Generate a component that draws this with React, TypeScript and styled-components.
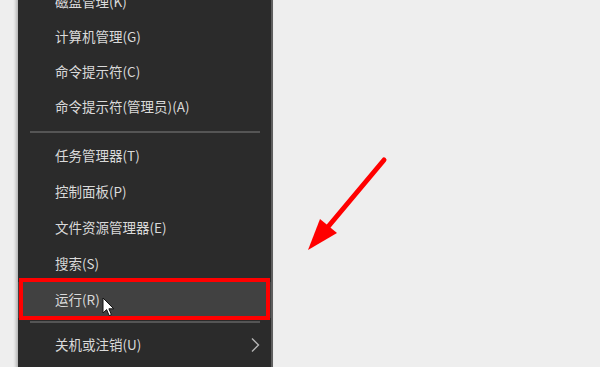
import React, { FC } from "react"
import styled, { createGlobalStyle } from "styled-components"

interface IItem {
  label: string
  active?: boolean
  submenu?: boolean
}

const groups: IItem[][] = [
  [{ label: "磁盘管理(K)" }, { label: "计算机管理(G)" }, { label: "命令提示符(C)" }, { label: "命令提示符(管理员)(A)" }],
  [
    { label: "任务管理器(T)" },
    { label: "控制面板(P)" },
    { label: "文件资源管理器(E)" },
    { label: "搜索(S)" },
    { label: "运行(R)", active: true },
  ],
  [{ label: "关机或注销(U)", submenu: true }],
]

const Cursor: FC = () => (
  <CursorIcon width="13" height="20" viewBox="0 0 13 20">
    <path d="M1 1 L1 16 L4.6 12.6 L7.2 18.6 L9.4 17.6 L6.9 11.8 L11.8 11.8 Z" fill="#fff" stroke="#111" strokeWidth="1" strokeLinejoin="round" />
  </CursorIcon>
)

const Chevron: FC = () => (
  <svg width="10" height="16" viewBox="0 0 10 16">
    <path d="M2 1.5 L8.5 8 L2 14.5" fill="none" stroke="#b4b4b4" strokeWidth="1.4" />
  </svg>
)

const RedArrow: FC = () => (
  <ArrowSvg width="90" height="102" viewBox="0 0 90 102">
    {/* shaft runs from the tail into the middle of the head */}
    <line x1="77" y1="10" x2="20" y2="78" stroke="#ff0000" strokeWidth="5" strokeLinecap="round" />
    <polygon points="1,100 13,69 30,83" fill="#ff0000" />
  </ArrowSvg>
)

const App: FC = () => (
  <>
    <GlobalStyle />
    <Page>
      <Menu>
        {groups.map((group, gi) => (
          <React.Fragment key={gi}>
            {gi > 0 && (
              <Separator first={gi === 1}>
                <Line />
              </Separator>
            )}
            <Group first={gi === 0} wide={gi > 0}>
              {group.map(item => (
                <Row key={item.label} active={item.active}>
                  <Label>{item.label}</Label>
                  {item.active && <Cursor />}
                  {item.submenu && <Chevron />}
                </Row>
              ))}
            </Group>
          </React.Fragment>
        ))}
      </Menu>
      <RedArrow />
    </Page>
  </>
)

export default App

//---------------------------STYLES-------------------------------------------//

const GlobalStyle = createGlobalStyle`
  html, body {
    margin: 0;
    padding: 0;
    height: 100%;
    overflow: hidden;
    background: #eeeeee;
  }
  #root {
    height: 100%;
  }
`

const Page = styled.div`
  position: relative;
  height: 367px;
  width: 600px;
  overflow: hidden;
  background: #eeeeee;
  font-family: "Noto Sans CJK SC", "Noto Sans", sans-serif;
`

const Menu = styled.div`
  margin-left: 18px;
  width: 253px;
  height: 420px;
  background: #2b2b2b;
  border-right: 2px solid #5e5e5e;
  box-shadow: -2px 0 3px rgba(0, 0, 0, 0.25);
`

interface IGroup {
  first?: boolean
  wide?: boolean
}

const Group = styled.div<IGroup>`
  display: flex;
  flex-direction: column;
  margin-top: ${p => (p.first ? "-16px" : "0")};
  & > div {
    height: ${p => (p.wide ? "36px" : "35px")};
  }
`

interface IRow {
  active?: boolean
}

const Row = styled.div<IRow>`
  position: relative;
  display: flex;
  align-items: center;
  padding: 0 11px 0 37px;
  background: ${p => (p.active ? "#414141" : "transparent")};
  &::after {
    content: "";
    display: ${p => (p.active ? "block" : "none")};
    position: absolute;
    left: 1px;
    right: 1px;
    top: -4px;
    bottom: -2px;
    border: 4px solid #ff0000;
  }
`

const Label = styled.span`
  flex: 1;
  color: #dadada;
  font-size: 13.5px;
  line-height: 1;
  white-space: nowrap;
`

const CursorIcon = styled.svg`
  position: absolute;
  left: 84px;
  top: 15px;
  z-index: 2;
`

interface ISeparator {
  first?: boolean
}

const Separator = styled.div<ISeparator>`
  padding: ${p => (p.first ? "7px 11px 5px 12px" : "3px 11px 4px 12px")};
`

const Line = styled.div`
  height: 2px;
  background: #555555;
`

const ArrowSvg = styled.svg`
  position: absolute;
  left: 307px;
  top: 150px;
`
